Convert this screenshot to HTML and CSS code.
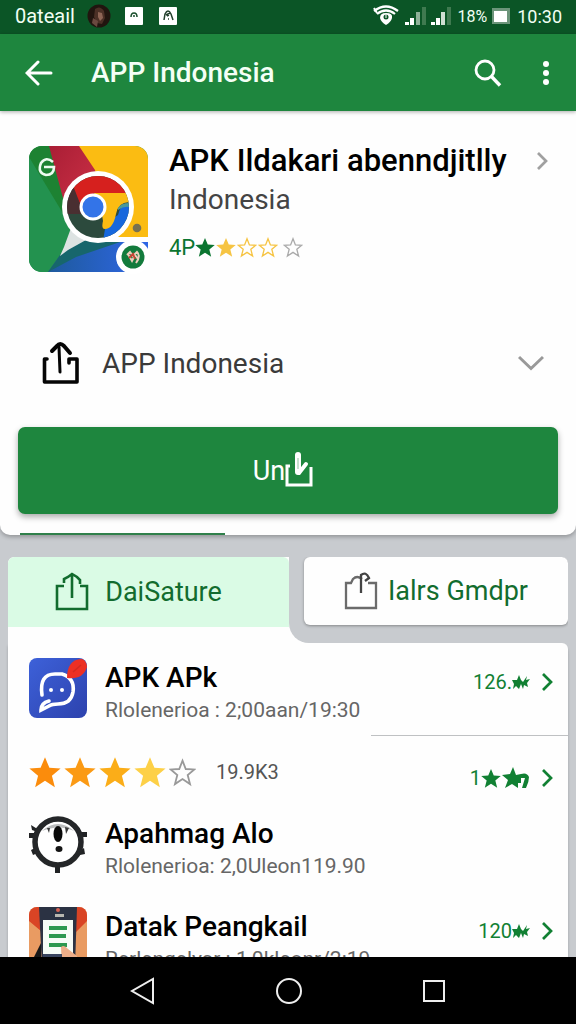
FILE: index.html
```html
<!DOCTYPE html>
<html lang="id">
<head>
<meta charset="utf-8">
<meta name="viewport" content="width=device-width, initial-scale=1">
<title>APP Indonesia</title>
<link rel="stylesheet" href="styles.css">
</head>
<body>
<svg class="defs" aria-hidden="true">
  <defs>
    <symbol id="star" viewBox="0 0 24 24"><path d="M12 0.500l3.300 8 8.400.500-6.500 5.400 2.200 8.600L12 18.200 4.600 23l2.200-8.600L.300 9l8.400-.500z"/></symbol>
    <symbol id="star-line" viewBox="0 0 24 24"><path d="M12 1.500l2.900 7.400 7.600.400-5.900 4.900 2.100 8.100-6.700-4.500-6.700 4.500 2.100-8.100L1.500 9.300l7.600-.400z" fill="none" stroke="currentColor" stroke-width="1.600"/></symbol>
    <symbol id="chevron" viewBox="0 0 12 20"><path d="M2 2l8 8-8 8" fill="none" stroke="currentColor" stroke-width="2.700"/></symbol>
    <symbol id="burst" viewBox="0 0 18 16"><path d="M0 6l5 0 2-5 2 5 2 2 4-6-1 4 4-1-3 4 1 4-4-2-1 4-2-5-2 5-3-3-3 3 1-5z"/></symbol>
  </defs>
</svg>

<header class="status">
  <span class="carrier">0ateail</span>
  <svg class="avatar" viewBox="0 0 24 24"><circle cx="12" cy="12" r="11.500" fill="#21150f"/><path d="M8 5q5-4 9 2l1 7-3 6-5-1-3-6z" fill="#4b3026"/><path d="M11 8l4 1 1 5-3 3-2-4z" fill="#8d6555"/><path d="M6 14l5 3-1 6-5-4z" fill="#6a4940"/></svg>
  <svg class="chip" viewBox="0 0 18 18"><rect width="18" height="18" rx="1" fill="#fff"/><path d="M6 10q0-4 3-4t3 4" fill="none" stroke="#174d2a" stroke-width="1.500"/><circle cx="9" cy="9" r="1" fill="#174d2a"/></svg>
  <svg class="chip" viewBox="0 0 18 18"><rect width="18" height="18" rx="1" fill="#fff"/><path d="M5 13l1-6q3-6 6 0l2 6M7 8l4-2M8 9l2-1M9 12h1" fill="none" stroke="#23402d" stroke-width="1.500"/></svg>
  <div class="status-right">
    <svg class="wifi" viewBox="0 0 26 22"><path d="M1 6Q13-3 25 6M4 9Q13 2 22 9" fill="none" stroke="#fff" stroke-width="2.200"/><path d="M1 3l3 5" stroke="#fff" stroke-width="2"/><path d="M13 8q7 0 6 5-1 4-6 7-5-3-6-7 0-5 6-5z" fill="#fff"/><circle cx="13" cy="12" r="2.500" fill="#0b5526"/><path d="M13 9v4" stroke="#fff"/></svg>
    <svg class="signal" viewBox="0 0 21 20"><path d="M0 16h4v3H0zM5 12h4v7H5z" fill="#fff"/><path d="M11 6h4v13h-4z" fill="#8eb198"/><path d="M17 1h4v18h-4z" fill="#3f7a50"/></svg>
    <svg class="signal" viewBox="0 0 21 20"><path d="M0 16h4v3H0zM5 12h4v7H5z" fill="#fff"/><path d="M10 6h4v13h-4z" fill="#d0dfd3"/><path d="M16 1h4v18h-4z" fill="#3f7a50"/></svg>
    <span class="percent">18%</span>
    <svg class="battery" viewBox="0 0 20 18"><rect x="1" y="1" width="18" height="16" fill="#6c957a"/><rect x="3" y="4" width="13" height="11" fill="#fff"/></svg>
    <span class="clock">10:30</span>
  </div>
</header>

<div class="appbar">
  <button class="icon-btn" aria-label="Kembali"><svg width="28" height="28" viewBox="0 0 28 28"><path d="M26 14H3M13 3L2 14l11 11" fill="none" stroke="#fff" stroke-width="3" stroke-linecap="round"/></svg></button>
  <h1>APP Indonesia</h1>
  <button class="icon-btn" aria-label="Cari"><svg width="28" height="28" viewBox="0 0 28 28"><circle cx="11" cy="11" r="9" fill="none" stroke="#fff" stroke-width="2.800"/><path d="M17 17l9 9.500" stroke="#fff" stroke-width="3.400"/></svg></button>
  <button class="icon-btn more" aria-label="Menu"><svg width="8" height="26" viewBox="0 0 8 26"><g fill="#fff"><circle cx="4" cy="4" r="3"/><circle cx="4" cy="13" r="3"/><circle cx="4" cy="22" r="3"/></g></svg></button>
</div>

<main>
  <section class="hero">
    <div class="app">
      <svg class="logo" viewBox="0 0 120 126">
        <defs>
          <clipPath id="tile"><rect width="119" height="126" rx="13"/></clipPath>
          <clipPath id="disc"><circle cx="69" cy="61" r="31"/></clipPath>
          <linearGradient id="red" x1="0" y1="0" x2="1" y2="1"><stop offset="0" stop-color="#a91e35"/><stop offset=".5" stop-color="#c02a40"/><stop offset="1" stop-color="#6b302c"/></linearGradient>
          <linearGradient id="blue"><stop offset="0" stop-color="#1e5a9c"/><stop offset="1" stop-color="#2f66e6"/></linearGradient>
        </defs>
        <g clip-path="url(#tile)">
          <rect width="120" height="126" fill="#1e8f4c"/>
          <path d="M0 0h22l42 84-28 9L0 12z" fill="#1d8232"/>
          <path d="M0 11l44 73-12 27-12 15H0z" fill="#23924f"/>
          <path d="M20 0h33l25 30-36 52z" fill="url(#red)"/>
          <path d="M50 0h70v92H80L66 24z" fill="#fbbc12"/>
          <path d="M19 126l16-22 14-10h71v32z" fill="url(#blue)"/>
          <path d="M31 109l20-15h46l-50 17-28 15z" fill="#17666c"/>
          <path d="M42 82l15 12-18 10-8 6 4-9z" fill="#dde3e2"/>
          <path d="M76 91h44v5H60z" fill="#fff"/>
        </g>
        <circle cx="69" cy="61" r="36" fill="#fff"/>
        <g clip-path="url(#disc)">
          <rect x="38" y="30" width="62" height="62" fill="#2c4a3d"/>
          <path d="M40 38l17 30 8-21h37V28H38z" fill="#d6201e"/>
          <path d="M38 34v34h17L45 42z" fill="#492f31"/>
          <path d="M101 58q-10 0-12 11l-12 8-4 24h31z" fill="#1768dd"/>
          <path d="M65 47h36v9q-12 0-14 12-3 15-11 15-4 0-2-8l-2-12z" fill="#fbbc12"/>
          <path d="M89 62q3-5 11-5v4q-5-1-11 3z" fill="#4a9999"/>
        </g>
        <circle cx="64" cy="61" r="12" fill="#3374e8" stroke="#fff" stroke-width="3"/>
        <path d="M24 16q-7-6-12 1-4 10 5 12 8 0 8-8H15" fill="none" stroke="#eefbf0" stroke-width="2.600"/>
        <circle cx="108" cy="82" r="4.300" fill="#777151"/>
        <circle cx="104" cy="111" r="17" fill="#fff"/>
        <circle cx="104" cy="111" r="11.500" fill="#137b3c"/>
        <path d="M98 109l3-3 3 4 4-4q4 4-1 11M99 108l4 7 3-6 3 4" fill="none" stroke="#efcdbb" stroke-width="2"/><path d="M100 112l4-4 2 5" fill="none" stroke="#c94434" stroke-width="2"/>
      </svg>
      <div class="app-info">
        <a class="app-title" href="#detail"><h2>APK Ildakari abenndjitlly</h2><svg class="chev grey" aria-hidden="true"><use href="#chevron"/></svg></a>
        <p class="publisher">Indonesia</p>
        <div class="hero-rating"><span>4P</span><svg class="s green"><use href="#star"/></svg><svg class="s gold"><use href="#star"/></svg><svg class="s gold"><use href="#star-line"/></svg><svg class="s gold"><use href="#star-line"/></svg><svg class="s none"><use href="#star-line"/></svg></div>
      </div>
    </div>
    <button class="expand">
      <svg width="38" height="44" viewBox="0 0 38 44" fill="none" stroke="#050505" stroke-linecap="round" stroke-linejoin="round"><path d="M5 18H2.500v23H35V18h-8v4" stroke-width="3.600"/><path d="M10 10l5-5q3-4 7 0l6 7" stroke-width="4"/><path d="M17 6l1 25" stroke-width="3"/></svg>
      <span>APP Indonesia</span>
      <svg class="down" width="26" height="16" viewBox="0 0 26 16"><path d="M1 2l12 11.500L25 2" fill="none" stroke="#999" stroke-width="3"/></svg>
    </button>
    <button class="primary">Un<svg width="28" height="38" viewBox="0 0 28 38" fill="none" stroke="#fff"><path d="M5 14H2v19h24V15" stroke-width="3"/><path d="M13 3v17" stroke-width="6" stroke-linecap="round"/><path d="M13 6v11" stroke="#8fc39d"/><path d="M14 21l7-9" stroke-width="4" stroke-linecap="round"/></svg></button>
    <div class="progress"></div>
  </section>

  <nav class="tabs">
    <div class="tab-left">
      <button class="tab active"><svg width="34" height="40" viewBox="0 0 34 40" fill="none" stroke="currentColor" stroke-width="2.600"><path d="M9 14H2v23h30V14h-7"/><path d="M9 11V7l4-2 4-3 5 3 3 3v4M17 3v23"/></svg>DaiSature</button>
    </div>
    <div class="tab-right">
      <button class="tab"><svg width="34" height="40" viewBox="0 0 34 40" fill="none" stroke="#6b6b6b" stroke-width="2.300"><path d="M18 8q-5-4-9 0l-2 4H2v25h30V12h-8"/><path d="M17 22V4q5-4 8 3l-4 3" stroke="#444"/></svg>Ialrs Gmdpr</button>
    </div>
  </nav>

  <section class="list">
    <article class="row">
      <svg class="thumb" viewBox="0 0 58 60"><defs><linearGradient id="tb" x1="0" y1="0" x2="1" y2="1"><stop offset="0" stop-color="#3d61d9"/><stop offset="1" stop-color="#2d42ad"/></linearGradient></defs><rect width="58" height="60" rx="8" fill="url(#tb)"/><path d="M13 37Q10 16 26 16h7q13 4 11 18-2 12-15 12-6 0-9 2l-8 4q0-7 8-9" fill="none" stroke="#fff" stroke-width="3.600" stroke-linecap="round"/><circle cx="22" cy="32" r="2" fill="#fff"/><circle cx="33" cy="32" r="2" fill="#fff"/><path d="M38 20q0-18 14-19 5 0 6 8-4 13-20 11z" fill="#ec3024"/><path d="M44 14l8-7" stroke="#d32a20" stroke-width="1.500"/></svg>
      <div class="text"><h3>APK APk</h3><p>Rlolenerioa : 2;00aan/19:30</p></div>
      <a class="trail" href="#a1">126.<svg class="burst"><use href="#burst"/></svg><svg class="chev"><use href="#chevron"/></svg></a>
    </article>
    <hr>
    <div class="row rating">
      <div class="stars"><svg class="o1"><use href="#star"/></svg><svg class="o2"><use href="#star"/></svg><svg class="o3"><use href="#star"/></svg><svg class="o4"><use href="#star"/></svg><svg class="o5"><use href="#star-line"/></svg><span>19.9K3</span></div>
      <a class="trail" href="#a2">1<svg class="s"><use href="#star"/></svg><svg class="merged" viewBox="0 0 28 22"><path d="M11 0l3 8 5-1q6-2 8 3 0 5-3 11h-4l3-10-4 0v5l-3 0v5l-6-4-7 4 3-8-6-5 8-1z"/></svg><svg class="chev"><use href="#chevron"/></svg></a>
    </div>
    <article class="row">
      <svg class="thumb" viewBox="0 0 58 60"><g fill="#202224"><path d="M0 19h7v5H0zM51 18h7v5h-7zM2 36l6-3 3 5-7 3zM49 38l6-4 1 6-5 1zM26 52h5v7h-5zM2 11l8 5 1 3-8-3z"/></g><circle cx="29" cy="28" r="23" fill="#fff" stroke="#242628" stroke-width="5.500"/><path d="M13 17q16-14 32 0-15-7-32 0z" fill="#b9bbbc"/><ellipse cx="29" cy="20" rx="4.500" ry="8" fill="#090909"/><ellipse cx="30" cy="35" rx="3.500" ry="3" fill="#151515"/><path d="M18 14l2 5 1-5zM36 13l4 1-3 6z" fill="#3a3a3a"/></svg>
      <div class="text"><h3>Apahmag Alo</h3><p>Rlolenerioa: 2,0Uleon119.90</p></div>
    </article>
    <article class="row last">
      <svg class="thumb" viewBox="0 0 58 60"><defs><clipPath id="r"><rect width="58" height="70" rx="8"/></clipPath></defs><g clip-path="url(#r)"><rect width="58" height="60" fill="#e99b62"/><path d="M0 0h20L12 24 0 14zM38 0h20v14L44 28z" fill="#d94425"/><path d="M10 0h38l-2 60H13z" fill="#2b3243"/><path d="M12 36v24H0z" fill="#171717"/><rect x="26" y="7" width="9" height="3" fill="#b8b7b0"/><circle cx="29" cy="3" r="2" fill="#d66253"/><path d="M14 13h30v36H14z" fill="#f5fcf6"/><path d="M20 21h18M20 29h17M20 38h18" stroke="#2c9950" stroke-width="4"/><path d="M32 40q3-3 7 2l9 7v12H33z" fill="#edae89"/><path d="M14 47h19v13H14z" fill="#38445e"/></g></svg>
      <div class="text"><h3>Datak Peangkail</h3><p>Rerlengelyar : 1,0kleonr/2:19</p></div>
      <a class="trail" href="#a3">120<svg class="burst"><use href="#burst"/></svg><svg class="chev"><use href="#chevron"/></svg></a>
    </article>
  </section>
</main>

<footer class="sysnav">
  <button aria-label="Back"><svg width="26" height="28" viewBox="0 0 26 28"><path d="M23 2v24L2 14z"/></svg></button>
  <button aria-label="Home"><svg width="28" height="28" viewBox="0 0 28 28"><circle cx="14" cy="14" r="12"/></svg></button>
  <button aria-label="Recents"><svg width="24" height="24" viewBox="0 0 24 24"><path d="M2 2h20v20H2z"/></svg></button>
</footer>
</body>
</html>
```
FILE: styles.css
```css
* { box-sizing: border-box; }
body {
  margin: 0;
  height: 100vh;
  display: flex;
  flex-direction: column;
  background: #c8cbcf;
  color: #000;
  font-family: Roboto, "Liberation Sans", sans-serif;
}
h1, h2, h3, p { margin: 0; font-weight: 500; }
button { border: 0; padding: 0; background: none; font: inherit; color: inherit; cursor: pointer; }
a { color: inherit; text-decoration: none; }
svg { display: block; flex: none; }
.defs { position: absolute; width: 0; height: 0; }

.status {
  flex: none;
  height: 34px;
  display: flex;
  align-items: center;
  padding: 0 14px 2px 15px;
  background: #0b5526;
  color: #f2fff4;
  font-size: 20px;
}
.carrier { width: 72px; }
.avatar { width: 24px; height: 24px; }
.chip { width: 18px; height: 18px; margin-left: 14px; }
.chip + .chip { margin-left: 16px; }
.status-right { display: flex; align-items: center; margin-left: auto; }
.wifi { width: 26px; height: 22px; margin-right: 6px; }
.signal { width: 21px; height: 20px; margin-right: 5px; }
.percent { font-size: 16px; }
.clock { font-size: 18px; }
.battery { width: 20px; height: 18px; margin: 0 6px 0 4px; }

.appbar {
  flex: none;
  height: 77px;
  display: flex;
  align-items: center;
  padding: 0 26px 0 25px;
  background: #1e863e;
  color: #f4fff5;
  box-shadow: 0 1px 4px #0005;
  z-index: 1;
}
.appbar h1 { flex: 1; margin-left: 38px; font-size: 28px; }
.more { margin-left: 40px; }

main { flex: 1; min-height: 0; overflow: hidden; }
.hero {
  background: #fefefe;
  padding: 32px 18px 0;
  border-radius: 0 0 10px 10px;
  box-shadow: 0 2px 4px #0004;
}
.app { display: flex; padding-left: 11px; gap: 20px; }
.logo { width: 120px; height: 132px; }
.app-info { flex: 1; min-width: 0; }
.app-title { display: flex; align-items: center; justify-content: space-between; padding-right: 10px; }
.app-title h2 { font-size: 31px; line-height: 36px; white-space: nowrap; }
.chev { width: 12px; height: 20px; }
.grey { color: #a0a0a0; }
.publisher { font-size: 28px; line-height: 42px; font-weight: 400; color: #444; }
.hero-rating { display: flex; align-items: center; height: 52px; color: #0b7530; font-size: 22px; }
.s { width: 20px; height: 21px; fill: currentColor; }
.gold { color: #f6c443; }
.hero-rating .gold { margin-left: 1px; }
.hero-rating .none { margin-left: 5px; color: #aaa; }

.expand {
  display: flex;
  align-items: center;
  width: 100%;
  height: 84px;
  margin-top: 46px;
  padding: 0 14px 0 24px;
  font-size: 28px;
  color: #3a3a3a;
}
.expand span { margin-left: 22px; }
.down { margin-left: auto; }
.primary {
  display: flex;
  align-items: center;
  justify-content: center;
  width: 100%;
  height: 87px;
  margin-top: 22px;
  padding-right: 10px;
  border-radius: 7px;
  background: #1e863e;
  color: #fff;
  font-size: 27px;
  box-shadow: 0 3px 6px #0005;
}
.progress { width: 38%; height: 2px; margin: 19px 0 0 2px; background: #30804b; }

.tabs { display: grid; grid-template-columns: 281fr 279fr; margin: 22px 8px 0; background: #fefefe; border-radius: 6px 6px 0 0; overflow: hidden; }
.tab-left { padding-bottom: 16px; }
.tab-right { padding: 0 0 18px 15px; background: #c8cbcf; border-radius: 0 0 0 20px; }
.tab {
  display: flex;
  align-items: center;
  justify-content: center;
  gap: 10px;
  width: 100%;
  height: 68px;
  border-radius: 6px;
  background: #fefefe;
  color: #126c2e;
  font-size: 27px;
  box-shadow: 0 1px 3px #0005;
}
.tab.active {
  height: 70px;
  gap: 16px;
  padding-right: 20px;
  border-radius: 6px 6px 0 0;
  background: #dafbe5;
  box-shadow: none;
}

.list { margin: 0 8px; padding: 15px 0 0 21px; background: #fefefe; border-radius: 0 6px 0 0; box-shadow: 0 3px 3px #0003; }
.row { display: flex; align-items: flex-start; padding-right: 15px; }
.thumb { width: 58px; height: 60px; margin-right: 18px; }
.text { flex: 1; min-width: 0; padding-top: 4px; white-space: nowrap; }
.text h3 { font-size: 28px; line-height: 32px; }
.text p { font-size: 21px; line-height: 32px; font-weight: 400; color: #666; }
.trail { display: flex; align-items: center; height: 48px; margin-left: auto; color: #118033; font-size: 20px; }
.trail .chev { margin-left: 11px; }
.burst { width: 18px; height: 16px; fill: currentColor; }
.merged { width: 28px; height: 22px; margin-left: 1px; fill: currentColor; }
hr { height: 1px; margin: 9px 0 18px 342px; border: 0; background: #bfc1c3; }
.rating { margin-bottom: 12px; }
.stars { display: flex; align-items: center; gap: 3px; height: 36px; }
.stars svg { width: 32px; height: 33px; }
.stars .o1 { fill: #fb8c0c; }
.stars .o2 { fill: #fb9a14; }
.stars .o3 { fill: #fbad18; }
.stars .o4 { fill: #fdd047; }
.stars .o5 { width: 27px; color: #999; }
.stars span { margin-left: 17px; font-size: 20px; color: #555; }
.last { margin-top: 25px; }

.sysnav { flex: none; display: flex; align-items: center; justify-content: center; gap: 119px; height: 67px; background: #000; }
.sysnav svg { fill: none; stroke: #eee; stroke-width: 2; }
```
